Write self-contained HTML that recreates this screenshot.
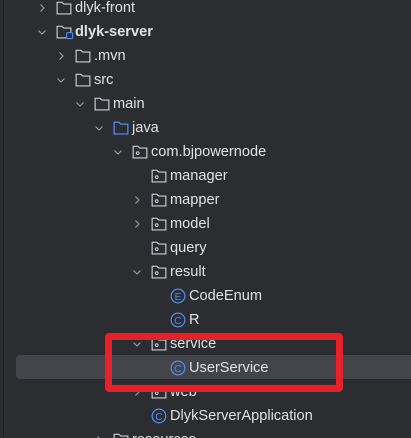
<!DOCTYPE html>
<html><head><meta charset="utf-8"><style>
html,body{margin:0;padding:0;width:411px;height:438px;overflow:hidden;}
body{background:#2b2d30;position:relative;font-family:"Liberation Sans","DejaVu Sans",sans-serif;font-size:14.6px;color:#dfe1e5;}
.vl{position:absolute;left:3px;top:0;width:1px;height:438px;background:#1e1f22;}
.hl{position:absolute;left:16px;top:355px;width:400px;height:24px;background:#43454a;border-radius:4px;}
.row{position:absolute;height:24px;line-height:24px;white-space:nowrap;}
.row svg{position:absolute;top:4px;}
.t{position:absolute;top:0;}
.red{position:absolute;left:105px;top:333px;width:224px;height:45px;border:7px solid #e8202a;border-radius:4px;}
</style></head><body>
<div class="vl"></div>
<div class="hl"></div>
<svg width="0" height="0" style="position:absolute">
<defs>
<symbol id="fold" viewBox="0 0 14 14"><path d="M1 2h4.3l1.5 1.6h6.2v8.6h-12z" fill="none" stroke="#ced0d6" stroke-width="1"/></symbol>
<symbol id="pkg" viewBox="0 0 14 14"><path d="M1 2h4.3l1.5 1.6h6.2v8.6h-12z" fill="none" stroke="#ced0d6" stroke-width="1"/><circle cx="5" cy="8" r="1.2" fill="none" stroke="#ced0d6" stroke-width="0.9"/></symbol>
<symbol id="jfold" viewBox="0 0 14 14"><path d="M1 2h4.3l1.5 1.6h6.2v8.6h-12z" fill="none" stroke="#548af7" stroke-width="1.1"/></symbol>
<symbol id="down" viewBox="0 0 10 10"><path d="M1.5 3.5l3.5 3.5 3.5-3.5" fill="none" stroke="#9da0a8" stroke-width="1.1"/></symbol>
<symbol id="right" viewBox="0 0 10 10"><path d="M3.5 1.5l3.5 3.5-3.5 3.5" fill="none" stroke="#9da0a8" stroke-width="1.1"/></symbol>
<symbol id="cls" viewBox="0 0 14 14"><circle cx="7" cy="7" r="6" fill="none" stroke="#548af7" stroke-width="1.1"/><text x="7" y="10.3" font-size="9" text-anchor="middle" fill="#548af7" font-family="Liberation Sans">C</text></symbol>
<symbol id="enm" viewBox="0 0 14 14"><circle cx="7" cy="7" r="6" fill="none" stroke="#548af7" stroke-width="1.1"/><text x="7" y="10.3" font-size="9" text-anchor="middle" fill="#548af7" font-family="Liberation Sans">E</text></symbol>
</defs></svg>

<div class="row" style="top:-4px;left:37px"><svg width="10" height="10" style="top:7px"><use href="#right"/></svg><svg width="16" height="16" style="left:19px"><use href="#fold"/></svg><span class="t" style="left:38px">dlyk-front</span></div>
<div class="row" style="top:20px;left:37px"><svg width="10" height="10" style="top:7px"><use href="#down"/></svg><svg width="16" height="16" style="left:19px"><use href="#fold"/></svg><svg width="8" height="8" style="left:29px;top:12px"><rect x="0.6" y="0.6" width="6" height="6" rx="1.2" fill="#2b2d30" stroke="#548af7" stroke-width="1.1"/></svg><span class="t" style="left:38px;font-weight:bold">dlyk-server</span></div>
<div class="row" style="top:44px;left:56px"><svg width="10" height="10" style="top:7px"><use href="#right"/></svg><svg width="16" height="16" style="left:19px"><use href="#fold"/></svg><span class="t" style="left:38px">.mvn</span></div>
<div class="row" style="top:68px;left:56px"><svg width="10" height="10" style="top:7px"><use href="#down"/></svg><svg width="16" height="16" style="left:19px"><use href="#fold"/></svg><span class="t" style="left:38px">src</span></div>
<div class="row" style="top:92px;left:75px"><svg width="10" height="10" style="top:7px"><use href="#down"/></svg><svg width="16" height="16" style="left:19px"><use href="#fold"/></svg><span class="t" style="left:38px">main</span></div>
<div class="row" style="top:116px;left:94px"><svg width="10" height="10" style="top:7px"><use href="#down"/></svg><svg width="16" height="16" style="left:19px"><use href="#jfold"/></svg><span class="t" style="left:38px">java</span></div>
<div class="row" style="top:140px;left:113px"><svg width="10" height="10" style="top:7px"><use href="#down"/></svg><svg width="16" height="16" style="left:19px"><use href="#pkg"/></svg><span class="t" style="left:38px">com.bjpowernode</span></div>
<div class="row" style="top:164px;left:132px"><svg width="16" height="16" style="left:19px"><use href="#pkg"/></svg><span class="t" style="left:38px">manager</span></div>
<div class="row" style="top:188px;left:132px"><svg width="10" height="10" style="top:7px"><use href="#right"/></svg><svg width="16" height="16" style="left:19px"><use href="#pkg"/></svg><span class="t" style="left:38px">mapper</span></div>
<div class="row" style="top:212px;left:132px"><svg width="10" height="10" style="top:7px"><use href="#right"/></svg><svg width="16" height="16" style="left:19px"><use href="#pkg"/></svg><span class="t" style="left:38px">model</span></div>
<div class="row" style="top:236px;left:132px"><svg width="16" height="16" style="left:19px"><use href="#pkg"/></svg><span class="t" style="left:38px">query</span></div>
<div class="row" style="top:260px;left:132px"><svg width="10" height="10" style="top:7px"><use href="#down"/></svg><svg width="16" height="16" style="left:19px"><use href="#pkg"/></svg><span class="t" style="left:38px">result</span></div>
<div class="row" style="top:284px;left:151px"><svg width="16" height="16" style="left:19px"><use href="#enm"/></svg><span class="t" style="left:38px">CodeEnum</span></div>
<div class="row" style="top:308px;left:151px"><svg width="16" height="16" style="left:19px"><use href="#cls"/></svg><span class="t" style="left:38px">R</span></div>
<div class="row" style="top:332px;left:132px"><svg width="10" height="10" style="top:7px"><use href="#down"/></svg><svg width="16" height="16" style="left:19px"><use href="#pkg"/></svg><span class="t" style="left:38px">service</span></div>
<div class="row" style="top:356px;left:151px"><svg width="16" height="16" style="left:19px"><use href="#cls"/></svg><span class="t" style="left:38px">UserService</span></div>
<div class="row" style="top:380px;left:132px"><svg width="10" height="10" style="top:7px"><use href="#right"/></svg><svg width="16" height="16" style="left:19px"><use href="#pkg"/></svg><span class="t" style="left:38px">web</span></div>
<div class="row" style="top:404px;left:132px"><svg width="16" height="16" style="left:19px"><use href="#cls"/></svg><span class="t" style="left:38px">DlykServerApplication</span></div>
<div class="row" style="top:428px;left:94px"><svg width="10" height="10" style="top:7px"><use href="#right"/></svg><svg width="16" height="16" style="left:19px"><use href="#fold"/></svg><span class="t" style="left:38px">resources</span></div>
<div class="red"></div>
</body></html>
